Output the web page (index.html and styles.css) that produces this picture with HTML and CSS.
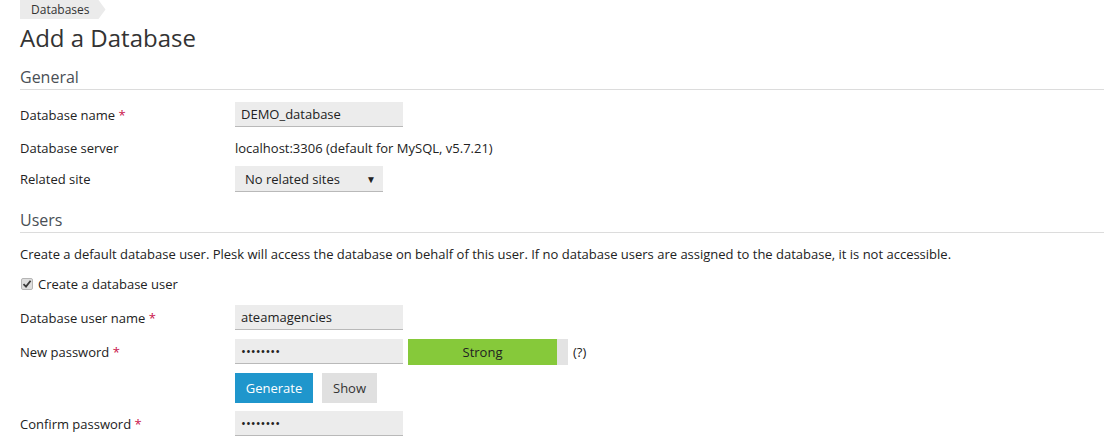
FILE: index.html
```html
<!DOCTYPE html>
<html lang="en">
<head>
<meta charset="utf-8">
<title>Add a Database</title>
<link rel="stylesheet" href="styles.css">
</head>
<body>
<div class="page">
  <div class="crumbs"><span class="crumb">Databases</span></div>
  <h1 class="title">Add a Database</h1>

  <h2 class="section">General</h2>
  <div class="row row-name">
    <label class="label">Database name <span class="req">*</span></label>
    <div class="field"><input class="input" type="text" value="DEMO_database"></div>
  </div>
  <div class="row row-server">
    <span class="label">Database server</span>
    <div class="field"><span class="value">localhost:3306 (default for MySQL, v5.7.21)</span></div>
  </div>
  <div class="row row-site">
    <span class="label">Related site</span>
    <div class="field">
      <div class="select"><span>No related sites</span><span class="caret">&#9660;</span></div>
    </div>
  </div>

  <h2 class="section section-users">Users</h2>
  <p class="hint">Create a default database user. Plesk will access the database on behalf of this user. If no database users are assigned to the database, it is not accessible.</p>
  <div class="check-row">
    <span class="checkbox"><svg width="10" height="10" viewBox="0 0 10 10"><path d="M1.5 5.2 L4 7.6 L8.6 1.8" fill="none" stroke="#3a3a3a" stroke-width="1.8"/></svg></span>
    <span class="check-label">Create a database user</span>
  </div>
  <div class="row row-user">
    <label class="label">Database user name <span class="req">*</span></label>
    <div class="field"><input class="input" type="text" value="ateamagencies"></div>
  </div>
  <div class="row row-pass">
    <label class="label">New password <span class="req">*</span></label>
    <div class="field field-top">
      <input class="input" type="password" value="abcdefgh">
      <div class="meter"><div class="meter-fill">Strong</div></div>
      <span class="help">(?)</span>
    </div>
  </div>
  <div class="row row-buttons">
    <span class="label"></span>
    <div class="field buttons">
      <button class="btn btn-primary" type="button">Generate</button>
      <button class="btn btn-secondary" type="button">Show</button>
    </div>
  </div>
  <div class="row row-confirm">
    <label class="label">Confirm password <span class="req">*</span></label>
    <div class="field"><input class="input" type="password" value="abcdefgh"></div>
  </div>
</div>
</body>
</html>
```

FILE: styles.css
```css
* { box-sizing: border-box; }
html, body { margin: 0; padding: 0; background: #fff; }
body {
  font-family: "Open Sans", "Noto Sans", sans-serif;
  font-size: 13px;
  color: #222;
  overflow: hidden;
}
.page { padding: 0 0 0 20px; }

.crumbs { display: flex; height: 19px; }
.crumb {
  display: inline-flex;
  align-items: center;
  height: 19px;
  padding: 0 16px 0 11px;
  background: #ebebeb;
  color: #333;
  font-size: 12px;
  clip-path: polygon(0 0, calc(100% - 7px) 0, 100% 50%, calc(100% - 7px) 100%, 0 100%);
}

.title {
  margin: 3px 0 0 0;
  height: 32px;
  line-height: 32px;
  font-size: 24px;
  font-weight: 400;
  color: #333;
}

.section {
  margin: 12px 0 0 0;
  height: 24px;
  line-height: 22px;
  font-size: 16px;
  font-weight: 400;
  color: #4a4f55;
  border-bottom: 1px solid #dcdcdc;
}
.section-users { margin-top: 17px; }

.row { display: flex; align-items: center; }
.label { width: 215px; flex: none; color: #222; }
.req { color: #c9124a; }
.field { display: flex; align-items: center; }
.field-top { align-items: flex-start; }
.field-top .help { align-self: center; }

.row-name { margin-top: 12px; }
.row-server { margin-top: 9px; height: 24px; }
.row-site { margin-top: 6px; }
.row-user { margin-top: 11px; }
.row-pass { margin-top: 9px; }
.row-buttons { margin-top: 8px; }
.row-confirm { margin-top: 8px; }

.input {
  width: 168px;
  height: 25px;
  padding: 0 6px;
  border: 0;
  border-bottom: 1px solid #b9b9b9;
  background: #ececec;
  font-family: inherit;
  font-size: 13px;
  color: #222;
  outline: none;
}

.value { color: #222; }

.select {
  display: flex;
  align-items: center;
  justify-content: space-between;
  width: 148px;
  height: 26px;
  padding: 0 7px 0 10px;
  background: #ececec;
  border-bottom: 1px solid #b9b9b9;
  color: #222;
}
.caret { font-size: 10px; color: #222; }

.hint { margin: 10px 0 0 0; line-height: 22px; color: #222; }

.check-row { display: flex; align-items: center; margin-top: 9px; height: 20px; }
.checkbox {
  display: inline-flex;
  align-items: center;
  justify-content: center;
  width: 12px;
  height: 12px;
  margin-left: 1px;
  border: 1px solid #b5b5b5;
  border-radius: 2px;
  background: #dedede;
}
.check-label { margin-left: 5px; }

.meter {
  width: 160px;
  height: 26px;
  margin-left: 5px;
  background: #e3e3e3;
}
.meter-fill {
  width: 149px;
  height: 26px;
  line-height: 26px;
  text-align: center;
  background: #86c93a;
  color: #222;
}
.help { margin-left: 5px; color: #222; }

.buttons { gap: 9px; }
.btn {
  height: 30px;
  border: 0;
  font-family: inherit;
  font-size: 13px;
  cursor: pointer;
}
.btn-primary { width: 78px; background: #1f96cc; color: #fff; }
.btn-secondary { width: 55px; background: #e0e0e0; color: #333; }
```
